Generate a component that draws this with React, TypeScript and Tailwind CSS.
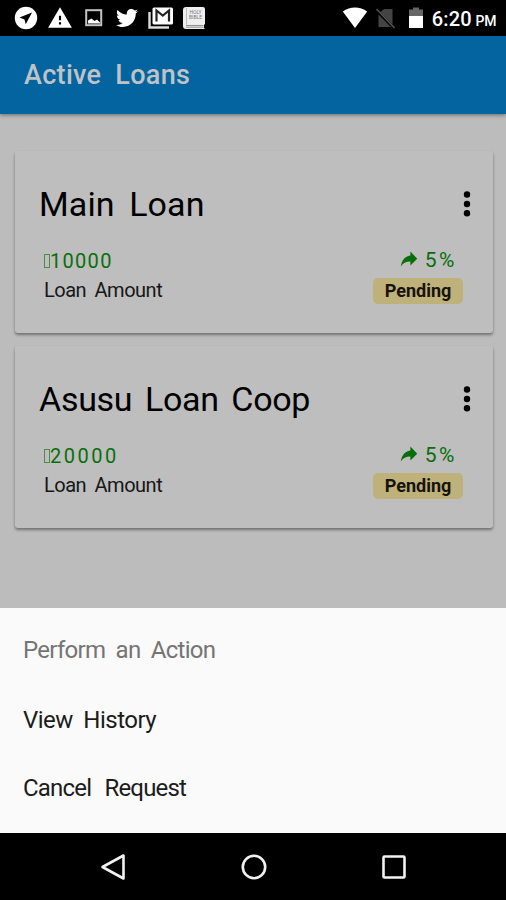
import { FaTwitter } from "react-icons/fa";
import { IoMdShareAlt } from "react-icons/io";
import { MdWarning } from "react-icons/md";

const loans = [
  { name: "Main Loan", amount: "10000", rate: "5%", status: "Pending", nameClass: "tracking-[0.1px] [word-spacing:6px]", amountClass: "tracking-[1.3px]" },
  { name: "Asusu Loan Coop", amount: "20000", rate: "5%", status: "Pending", nameClass: "tracking-[-0.3px] [word-spacing:4.5px]", amountClass: "tracking-[2.5px]" },
];

function StatusBar() {
  return (
    <div className="flex h-9 shrink-0 items-center bg-black pl-3.5 pr-2.5 text-white">
      <div className="flex items-center">
        <svg className="h-6 w-6" viewBox="0 0 24 24">
          <circle cx="12" cy="12" r="11.2" fill="#fff" />
          <path d="M18 6.5 5.5 11.5l5 2 1.2 4.8z" fill="#000" />
        </svg>
        <MdWarning className="ml-[9px] h-[26px] w-[26px]" />
        <svg className="ml-[11px] h-5 w-5" viewBox="0 0 20 20">
          <rect x="2.2" y="2.2" width="15" height="15" fill="none" stroke="#c4c4c4" strokeWidth="2" />
          <path d="M4 15.5v-3l3.5-2 3 2.5 2.5-1.5 3 3v1z" fill="#fff" />
        </svg>
        <FaTwitter className="ml-3 h-[22px] w-[22px]" />
        <svg className="ml-2.5 h-6 w-[26px]" viewBox="0 0 26 24">
          <path d="M1.5 6v15.5H21" fill="none" stroke="#ddd" strokeWidth="2.4" />
          <rect x="4.5" y="1.5" width="20.5" height="17" rx="1.5" fill="#fff" />
          <path d="M8.5 15.5V4.5l6.3 5 6.2-5v11" fill="none" stroke="#222" strokeWidth="2.2" />
        </svg>
        <svg className="ml-2 h-6 w-6" viewBox="0 0 24 24">
          <path d="M4 1h17a2 2 0 0 1 2 2v15l-1 1v3l1 1H4a3 3 0 0 1-3-3V4a3 3 0 0 1 3-3z" fill="#eee" />
          <path d="M4 19.5h17.5M4 21.2h17.5" stroke="#777" strokeWidth=".8" />
          <path d="M4.5 2v16.5" stroke="#bbb" strokeWidth="1" />
          <text x="13.5" y="8" fontSize="5" textAnchor="middle" fill="#777" fontFamily="Roboto, sans-serif">HOLY</text>
          <text x="13.5" y="13" fontSize="5" textAnchor="middle" fill="#777" fontFamily="Roboto, sans-serif">BIBLE</text>
        </svg>
      </div>
      <div className="ml-auto flex items-center">
        <svg className="h-6 w-[26px]" viewBox="0 0 26 24">
          <path d="M.8 5.5C8 .2 18 .2 25.2 5.5L13 22z" fill="#fff" />
        </svg>
        <svg className="ml-2 h-6 w-5" viewBox="0 0 20 24">
          <path d="M8 3h8.5v18H2.5V8z" fill="#444" />
          <path d="m0 4 18 18" stroke="#000" strokeWidth="3" />
          <path d="m.5 3 18 19" stroke="#555" strokeWidth="1.5" />
        </svg>
        <svg className="ml-3 h-6 w-4" viewBox="0 0 16 24">
          <path d="M1 3.5h4V1.5h6v2h4V10H1z" fill="#666" />
          <path d="M1 10h14v12H1z" fill="#fff" />
        </svg>
        <div className="ml-2 mt-0.5 flex items-baseline font-medium">
          <span className="text-xl tracking-[0.1px]">6:20</span>
          <span className="ml-1 text-sm tracking-[-0.4px]">PM</span>
        </div>
      </div>
    </div>
  );
}

function LoanCard({ loan }: { loan: (typeof loans)[number] }) {
  return (
    <div className="h-[182px] rounded-[3px] bg-[#bebebe] pl-6 shadow-[0_2px_3px_rgba(0,0,0,0.4)]">
      <div className="flex h-[106px] items-center justify-between pr-5 text-black">
        <h2 className={`text-[34px] leading-10 ${loan.nameClass}`}>{loan.name}</h2>
        <svg className="h-7 w-[14px]" viewBox="0 0 14 28">
          <circle cx="8" cy="4.5" r="3.2" />
          <circle cx="8" cy="14" r="3.2" />
          <circle cx="8" cy="23.3" r="3.2" />
        </svg>
      </div>
      <div className="flex justify-between pl-[5px] pr-[30px]">
        <div className="text-xl leading-[30px]">
          <div className="-mt-[11px] flex items-center text-[#086e0c]">
            <span className="h-3.5 w-1.5 border border-[#4c8a4e]"></span>
            <span className={loan.amountClass}>{loan.amount}</span>
          </div>
          <div className="-mt-px tracking-[-0.5px] text-[#171717] [word-spacing:4px]">Loan Amount</div>
        </div>
        <div className="-mt-[11px] flex flex-col items-end">
          <div className="mr-1.5 flex h-[30px] items-center text-[#086e0c]">
            <IoMdShareAlt className="mb-1 mr-[5px] h-6 w-[22px]" preserveAspectRatio="none" />
            <span className="text-[21px] tracking-[2.5px]">{loan.rate}</span>
          </div>
          <span className="mt-[2px] flex h-[26px] w-[90px] items-center justify-center rounded-[5px] bg-[#bfb17a] pb-0.5 text-[18px] font-bold text-[#17130c]">{loan.status}</span>
        </div>
      </div>
    </div>
  );
}

export default function App() {
  return (
    <div className="flex h-[900px] w-[506px] flex-col overflow-hidden bg-[#bcbcbc] font-[Roboto,sans-serif]">
      <StatusBar />
      <header className="z-10 flex h-[78px] shrink-0 items-center bg-[#0464a0] pl-6 shadow-[0_1px_4px_rgba(0,0,0,0.45)]">
        <h1 className="text-[27px] font-medium tracking-[0.3px] text-[#bfc3c7] [word-spacing:7px]">Active Loans</h1>
      </header>
      <main className="flex h-[494px] shrink-0 flex-col gap-[13px] pl-[15px] pr-[13px] pt-[37px]">
        {loans.map((loan) => (
          <LoanCard key={loan.name} loan={loan} />
        ))}
      </main>
      <section className="h-[225px] shrink-0 bg-[#fafafa] pl-[23px] pt-2 text-2xl">
        <p className="flex h-[68px] items-center tracking-[-0.7px] text-[#757575] [word-spacing:5px]">Perform an Action</p>
        <button className="flex h-[72px] items-center tracking-[-0.5px] text-[#1c1c1c] [word-spacing:5px]">View History</button>
        <button className="flex h-16 items-center tracking-[-0.8px] text-[#1c1c1c] [word-spacing:8px]">Cancel Request</button>
      </section>
      <nav className="flex h-[67px] shrink-0 items-center justify-between bg-black pl-[100px] pr-[98px]">
        <svg className="h-7 w-7" viewBox="0 0 28 28" fill="none" stroke="#f2f2f2" strokeWidth="2.6" strokeLinejoin="round">
          <path d="M23.5 2.5v23L2.5 14z" />
        </svg>
        <svg className="h-7 w-7" viewBox="0 0 28 28" fill="none" stroke="#f2f2f2" strokeWidth="2.6">
          <circle cx="14" cy="14" r="11.2" />
        </svg>
        <svg className="h-7 w-7" viewBox="0 0 28 28" fill="none" stroke="#f2f2f2" strokeWidth="2.6">
          <rect x="3.5" y="3.5" width="21" height="21" rx="1" />
        </svg>
      </nav>
    </div>
  );
}
